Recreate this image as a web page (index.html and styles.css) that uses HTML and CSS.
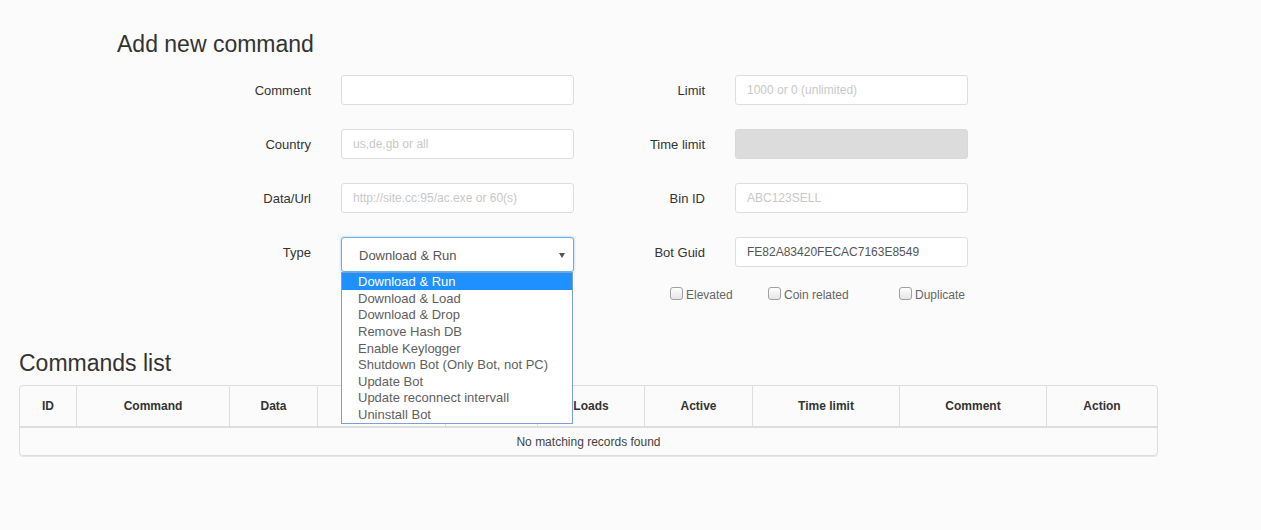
FILE: index.html
```html
<!DOCTYPE html>
<html>
<head>
<meta charset="utf-8">
<title>Add new command</title>
<link rel="stylesheet" href="styles.css">
</head>
<body>
<main class="page">
  <section class="add">
    <h3 class="title">Add new command</h3>
    <div class="form">
      <label class="lbl">Comment</label>
      <div class="input"></div>
      <label class="lbl">Limit</label>
      <div class="input"><span class="ph">1000 or 0 (unlimited)</span></div>

      <label class="lbl">Country</label>
      <div class="input"><span class="ph">us,de,gb or all</span></div>
      <label class="lbl">Time limit</label>
      <div class="input disabled"></div>

      <label class="lbl">Data/Url</label>
      <div class="input"><span class="ph">http://site.cc:95/ac.exe or 60(s)</span></div>
      <label class="lbl">Bin ID</label>
      <div class="input"><span class="ph">ABC123SELL</span></div>

      <label class="lbl">Type</label>
      <div class="select-wrap">
        <div class="select"><span>Download &amp; Run</span><span class="arrow"></span></div>
        <ul class="options">
          <li class="sel">Download &amp; Run</li>
          <li>Download &amp; Load</li>
          <li>Download &amp; Drop</li>
          <li>Remove Hash DB</li>
          <li>Enable Keylogger</li>
          <li>Shutdown Bot (Only Bot, not PC)</li>
          <li>Update Bot</li>
          <li>Update reconnect intervall</li>
          <li>Uninstall Bot</li>
        </ul>
      </div>
      <label class="lbl">Bot Guid</label>
      <div class="input"><span class="val">FE82A83420FECAC7163E8549</span></div>

      <div class="checks">
        <label class="chk c1"><span class="box"></span>Elevated</label>
        <label class="chk c2"><span class="box"></span>Coin related</label>
        <label class="chk"><span class="box"></span>Duplicate</label>
      </div>
    </div>
  </section>

  <section class="list">
    <h3 class="title">Commands list</h3>
    <div class="table-box">
      <table class="tbl">
        <thead>
          <tr>
            <th class="w1">ID</th>
            <th class="w2">Command</th>
            <th class="w3">Data</th>
            <th class="w4"></th>
            <th class="w5"></th>
            <th class="w6">Loads</th>
            <th class="w7">Active</th>
            <th class="w8">Time limit</th>
            <th class="w9">Comment</th>
            <th class="w10">Action</th>
          </tr>
        </thead>
        <tbody>
          <tr><td colspan="10" class="empty">No matching records found</td></tr>
        </tbody>
      </table>
    </div>
  </section>
</main>
</body>
</html>
```

FILE: styles.css
```css
* { box-sizing: border-box; }
html, body { margin: 0; padding: 0; }
body {
  background: #fbfbfb;
  font-family: "Liberation Sans", Arial, sans-serif;
  color: #333;
  width: 1261px;
  height: 530px;
  overflow: hidden;
}
.page { padding: 0 19px; }

.title {
  margin: 0;
  font-size: 23px;
  font-weight: normal;
  line-height: 26px;
  color: #333;
}
.add { padding-top: 31px; margin-left: 98px; }

.form {
  margin-top: 18px;
  display: grid;
  grid-template-columns: 194px 233px 101px 233px;
  column-gap: 30px;
  row-gap: 24px;
  align-items: start;
}
.lbl {
  text-align: right;
  font-size: 13px;
  line-height: 16px;
  padding-top: 8px;
  color: #333;
}
.input {
  height: 30px;
  background: #fff;
  border: 1px solid #ddd;
  border-radius: 3px;
  padding: 0 11px;
  font-size: 12px;
  line-height: 29px;
}
.input.disabled { background: #dcdcdc; border-color: #d8d8d8; }
.ph { color: #c8c8c8; }
.val { color: #555; }

.select-wrap { position: relative; z-index: 10; }
.select {
  height: 35px;
  background: #fff;
  border: 1px solid #66afe9;
  border-radius: 3px;
  box-shadow: 0 0 3px rgba(102,175,233,.6);
  padding: 0 8px 0 17px;
  font-size: 13px;
  line-height: 33px;
  color: #555;
  display: flex;
  justify-content: space-between;
  align-items: center;
}
.select span:first-child { padding-top: 2px; }
.arrow {
  width: 0; height: 0;
  border-left: 3px solid transparent;
  border-right: 3px solid transparent;
  border-top: 5px solid #555;
  margin-top: 1px;
}
.options {
  position: absolute;
  left: 0;
  top: 35px;
  width: 232px;
  margin: 0;
  padding: 0;
  list-style: none;
  background: #fff;
  border: 1px solid #7b9fd6;
  font-size: 13px;
  color: #606060;
}
.options li {
  height: 16.65px;
  line-height: 17px;
  padding-left: 16px;
  white-space: nowrap;
}
.options li.sel { background: #1e90ff; color: #fff; }

.checks {
  grid-column: 3 / 5;
  margin-top: -9px;
  padding-left: 66px;
  display: flex;
  font-size: 12px;
  line-height: 16px;
  color: #666;
}
.chk { display: inline-flex; align-items: center; }
.c1 { width: 98px; }
.c2 { width: 131px; }
.box {
  width: 13px; height: 13px;
  border: 1px solid #a0a0a0;
  border-radius: 3px;
  background: linear-gradient(#fdfdfd, #e6e6e6);
  margin-right: 3px;
  margin-top: -3px;
}

.list { margin-top: 47px; }
.table-box {
  margin-top: 9px;
  width: 1139px;
  border: 1px solid #ddd;
  border-radius: 4px;
  overflow: hidden;
  box-shadow: 0 1px 0 #e6e6e6;
}
.tbl {
  width: 100%;
  table-layout: fixed;
  border-collapse: separate;
  border-spacing: 0;
}
.tbl th {
  font-size: 12px;
  font-weight: bold;
  color: #333;
  height: 42px;
  padding: 0;
  text-align: center;
  border-bottom: 2px solid #ddd;
  border-left: 1px solid #ddd;
}
.tbl th.w1 { border-left: 0; width: 56px; }
.w2 { width: 153px; }
.w3 { width: 88px; }
.w4 { width: 128px; }
.w5 { width: 92px; }
.w6 { width: 107px; }
.w7 { width: 108px; }
.w8 { width: 147px; }
.w9 { width: 147px; }
.w10 { width: 111px; }
.tbl td.empty {
  font-size: 12px;
  color: #444;
  text-align: center;
  height: 27px;
  padding: 0;
}
```
